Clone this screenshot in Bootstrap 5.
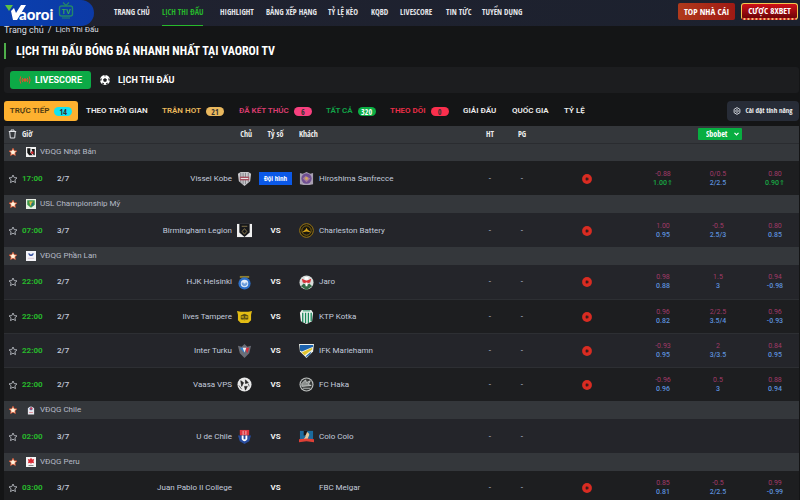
<!DOCTYPE html>
<html lang="vi">
<head>
<meta charset="utf-8">
<meta name="viewport" content="width=device-width, initial-scale=1">
<title>Lịch thi đấu bóng đá nhanh nhất tại Vaoroi TV</title>
<link href="https://cdn.jsdelivr.net/npm/bootstrap@5.3.0/dist/css/bootstrap.min.css" rel="stylesheet">
<style>
:root{--narrow:"Open Sans Condensed","Roboto Condensed","Roboto",sans-serif}
html{scrollbar-width:none}
body{background:#141516;color:#c3cbdc;font-family:"Roboto",sans-serif;font-size:8px;line-height:10px}
a{color:inherit;text-decoration:none}
svg{display:block;flex:none}
button{font:inherit;color:inherit}
.topbar{height:26px;background:linear-gradient(90deg,#202230,#1c212e);font-family:var(--narrow);font-weight:700;color:#e4e6ea}
.brand{width:94px;background:linear-gradient(90deg,#0a3fae,#0c3aa6);border-radius:0 13px 13px 0;overflow:hidden}
.menu{display:grid;grid-template-columns:48px 58px 46px 62px 43px 29px 46px 36px 42px;margin-left:20px}
.menu a{display:flex;align-items:center;justify-self:start;height:26px;padding-bottom:2px;white-space:nowrap;border-bottom:1px solid transparent}
.menu a.active{color:#27b82c;border-color:#27b82c}
.promos{gap:6px;padding:3px 2px 0 0}
.promo{font-size:9px;height:17px;border:0;border-radius:2px;color:#fff;padding:0 6px;white-space:nowrap;background:linear-gradient(90deg,#b03a1c,#a01a14)}
.promo-gold{border:1px solid #f3c650;border-bottom:2px dotted #f0c070;border-radius:3px;background:linear-gradient(#d01018,#6c0508)}
.crumbs{height:9px;line-height:8px;font-size:9px;color:#dcdfe4}
.crumbs ol{margin:0;padding:0}
.page-title{font:700 12px/16px "Roboto Condensed","Roboto",sans-serif;color:#fff;border-left:2px solid #4fae4a;padding-left:10px;margin:8px 0 8px 4px}
.panel{background:#1c1d1f;border-radius:3px;height:26px;margin:0 1px 0 4px;padding-left:6px;font-size:9px;font-weight:700;color:#fff}
.panel button{height:18px;border:0;background:none;padding:0 9px}
.panel .live{background:#0caa46;border-radius:3px;width:81px}
.tabs{margin:8px 1px 5px 4px;height:20px}
.tabs ul{display:grid;grid-template-columns:82px 76px 77px 87px 64px 73px 49px 52px 30px;margin:0;padding:0;list-style:none}
.tabs li button{height:20px;border:0;background:none;padding:0;display:flex;align-items:center;gap:5px;font-weight:600;color:#eee;white-space:nowrap}
.tabs li .on{background:#fdb12f;color:#4d3a12;border-radius:3px;width:74px;justify-content:center}
.pill{width:18px;height:9px;border-radius:5px;line-height:9px;text-align:center;font-weight:600;color:#333;font-family:var(--narrow)}
.tabs .c-hot{color:#eab95d}.tabs .c-done{color:#dc3d70}.tabs .c-all{color:#12a348}.tabs .c-follow{color:#ee2e48}
.bg-now{background:#10e4f2}.bg-hot{background:#e9b85e}.bg-done{background:#f8407f}.bg-every{background:#0caf45;color:#fff}.bg-follow{background:#fb2f4d}
.setup{background:#272c37;border:0;border-radius:4px;height:20px;width:72px;color:#eee;font-family:var(--narrow);font-weight:700;font-size:7px;white-space:nowrap;padding:0}
.sched{table-layout:fixed;width:calc(100% - 5px);margin:0 1px 0 4px;border-collapse:collapse}
.sched td,.sched th{padding:0;vertical-align:middle}
.sched thead tr{height:17px;background:#34373b;border-bottom:1px solid #2a2c30;font-family:var(--narrow);color:#eee}
.league{height:18px;background:#34373b;color:#b4bac6}
.sched .league th{font-weight:400}
.game{height:34px;background:#24252a;border-bottom:1px solid #2d2f33}
.game.dim{background:#1d1e20}
.game:has(+.league){border-bottom:0}
.sched .game td{padding-top:1px}
.hour{color:#27b82c;font-weight:700}
.day{font-weight:500}
.vs{font-weight:700;color:#f2f2f2}
.team{display:flex;align-items:center;gap:5px}
.team svg{width:15px;height:15px}
.blank{width:15px}
.lineup{background:#0b59e8;color:#fff;border:0;font:700 7px/13px var(--narrow);width:33px;padding:0;white-space:nowrap}
.odd{font-size:7px;line-height:9px;text-align:center;color:#a03a68}
.odd b{display:block;font-weight:500;color:#5c90dc}
.odd .up{color:#18a844}
.starbtn{border:0;background:none;padding:0;display:block;margin-left:4px}
.book{position:relative;display:inline-block}
.book select{appearance:none;border:0;border-radius:1px;background:#08ae41;color:#fff;font:700 8px/12px var(--narrow);height:12px;width:44px;padding:0 0 0 8px;display:block}
.book svg{position:absolute;right:2px;top:3px;pointer-events:none}
</style>
</head>
<body>
<svg width="0" height="0" class="position-absolute" aria-hidden="true">
<symbol id="star" viewBox="0 0 10 10"><path d="M5 1l1.200 2.600 2.800.3-2.100 1.900.6 2.800L5 7.200 2.500 8.600l.6-2.800L1 3.900l2.800-.3z" fill="none" stroke="#b4b8be" stroke-width=".9" stroke-linejoin="round"/></symbol>
<symbol id="starfull" viewBox="0 0 10 10"><path d="M5 1.200l1.200 2.500 2.700.3-2 1.800.5 2.700L5 7.200 2.600 8.500l.5-2.700-2-1.800 2.700-.3z" fill="#fff3dc" stroke="#e8502a" stroke-width=".7" stroke-linejoin="round"/></symbol>
<symbol id="play" viewBox="0 0 10 10"><circle cx="5" cy="5" r="4.900" fill="#d92c22"/><circle cx="5" cy="5" r="1.800" fill="#8a1d18"/><path d="M4.200 3.600L6.600 5 4.200 6.400z" fill="#1d1e20"/></symbol>
</svg>

<header class="topbar d-flex align-items-stretch">
<a class="brand" href="#" aria-label="Vaoroi TV"><svg width="94" height="26" viewBox="0 0 94 26"><path d="M5 5h8l-2 3-2 3z" fill="#5dc145"/><path d="M11 11l3-3 2 5 5-8h5L17 20h-4z" fill="#fff"/><text x="19" y="20" font-family="Lato,sans-serif" font-weight="900" font-size="15" fill="#fff">aoroi</text><rect x="59.500" y="6" width="13" height="10" rx="2" fill="none" stroke="#23866a" stroke-width="1.400"/><path d="M63 2.500l3 3 3-3M62 18h8" stroke="#23866a" fill="none" stroke-width="1.200"/><text x="66" y="13.500" text-anchor="middle" font-family="Roboto,sans-serif" font-weight="700" font-size="7" fill="#3ba55a">TV</text></svg></a>
<nav class="menu" aria-label="Chính"><a href="#">TRANG CHỦ</a><a href="#" class="active">LỊCH THI ĐẤU</a><a href="#">HIGHLIGHT</a><a href="#">BẢNG XẾP HẠNG</a><a href="#">TỶ LỆ KÈO</a><a href="#">KQBD</a><a href="#">LIVESCORE</a><a href="#">TIN TỨC</a><a href="#">TUYỂN DỤNG</a></nav>
<div class="promos ms-auto d-flex align-items-start"><button type="button" class="promo">TOP NHÀ CÁI</button><button type="button" class="promo promo-gold">CƯỢC 8XBET</button></div>
</header>

<main>
<nav class="crumbs px-1" aria-label="Đường dẫn"><ol class="d-flex gap-1 list-unstyled"><li><a href="#">Trang chủ</a></li><li aria-hidden="true">/</li><li class="small"><a href="#">Lịch Thi Đấu</a></li></ol></nav>
<h1 class="page-title">LỊCH THI ĐẤU BÓNG ĐÁ NHANH NHẤT TẠI VAOROI TV</h1>

<div class="panel d-flex align-items-center">
<button type="button" class="live d-flex align-items-center justify-content-center gap-1"><svg width="12" height="10" viewBox="0 0 10 8" fill="none" stroke="#e2512f" stroke-width="1"><circle cx="5" cy="4" r="1" fill="#e2512f"/><path d="M1.500 1Q0 4 1.500 7M8.500 1q1.500 3 0 6M3 2.200q-.8 1.800 0 3.600M7 2.200q.8 1.800 0 3.600" stroke-width=".8"/></svg>LIVESCORE</button>
<button type="button" class="d-flex align-items-center gap-2"><svg width="10" height="10" viewBox="0 0 10 10"><circle cx="5" cy="5" r="5" fill="#fff"/><path d="M5 3l2 1.500-.8 2.200H3.800L3 4.500zM3.500.4h3L5 1.500zM.2 4.200L1.500 3l.1 2-1 1.400zM9.800 4.200L8.500 3l-.1 2 1 1.400zM2.200 8.800l.3-1.400 1.600 1.200-.2 1zM7.800 8.800l-.3-1.400-1.600 1.200.2 1z" fill="#1c1d1f"/></svg>LỊCH THI ĐẤU</button>
</div>

<div class="tabs d-flex justify-content-between">
<ul>
<li><button type="button" class="on">TRỰC TIẾP <span class="pill bg-now">14</span></button></li>
<li><button type="button">THEO THỜI GIAN</button></li>
<li><button type="button" class="c-hot">TRẬN HOT <span class="pill bg-hot">21</span></button></li>
<li><button type="button" class="c-done">ĐÃ KẾT THÚC <span class="pill bg-done">6</span></button></li>
<li><button type="button" class="c-all">TẤT CẢ <span class="pill bg-every">320</span></button></li>
<li><button type="button" class="c-follow">THEO DÕI <span class="pill bg-follow">0</span></button></li>
<li><button type="button">GIẢI ĐẤU</button></li>
<li><button type="button">QUỐC GIA</button></li>
<li><button type="button">TỶ LỆ</button></li>
</ul>
<button type="button" class="setup d-flex align-items-center justify-content-center gap-1"><svg width="8" height="8" viewBox="0 0 8 8" fill="none" stroke="#dfe3ea"><path d="M4 .6l2.900 1.700v3.400L4 7.400 1.100 5.700V2.300z" stroke-width=".9"/><circle cx="4" cy="4" r="1.300" stroke-width=".8"/></svg>Cài đặt tính năng</button>
</div>

<table class="sched">
<colgroup><col style="width:18px"><col style="width:27px"><col style="width:41px"><col style="width:162px"><col style="width:47px"><col><col style="width:40px"><col style="width:24px"><col style="width:107px"><col style="width:44px"><col style="width:66px"><col style="width:48px"></colgroup>
<thead><tr>
<th><svg class="ms-1" width="9" height="10" viewBox="0 0 9 10" fill="none" stroke="#e4e6ea"><path d="M.8 2.500h7.400M3 2.300V1h3v1.300M1.700 2.700L2.300 9h4.400l.6-6.300" stroke-width="1"/></svg></th>
<th>Giờ</th><th></th><th class="text-end">Chủ</th><th class="text-center">Tỷ số</th><th>Khách</th><th class="text-center">HT</th><th class="text-center">PG</th><th></th>
<th colspan="3" class="text-center"><span class="book"><select aria-label="Nhà cái"><option>Sbobet</option></select><svg width="7" height="6" viewBox="0 0 7 6"><path d="M1.500 1.800l2 2 2-2" fill="none" stroke="#fff" stroke-width="1.200"/></svg></span></th>
</tr></thead>
<tbody id="list"></tbody>
</table>
</main>

<script src="https://cdn.jsdelivr.net/npm/bootstrap@5.3.0/dist/js/bootstrap.bundle.min.js"></script>
<script>
// Crests and league badges, drawn on a 16-unit grid
const art = {
japan:'<path fill="#f4f4f4" d="M0 0h16v16H0z"/><path fill="#151515" d="M2 2h5v7l4 4H5L2 9zM9 3h5v10h-2z"/><circle cx="10" cy="9" r="2.300" fill="#c9262a"/>',
usl:'<path fill="#e8efe4" d="M0 0h16v16H0z"/><path fill="#3d9a4a" d="M2 2h12v7l-6 5-6-5z"/><path fill="#e8b541" d="M5 4h6L7 11z"/><path fill="#2b6b80" d="M9 6h3v4l-3 2z"/>',
finland:'<path fill="#f3f3f7" d="M0 0h16v16H0z"/><path fill="#3853a0" d="M3 4h3l2 2 2-2h3l-3 4H6z"/><path fill="#c8a6b8" d="M3 11h10v1H3z"/>',
chile:'<path fill="#e8e8ee" d="M3 5q5-5 10 0v10H3z"/><circle cx="8" cy="6" r="2.500" fill="#4467ac"/><path fill="#d43c48" d="M7 4h3v3H7zM5 11h6v1H5z"/>',
peru:'<path fill="#f4f4f4" d="M0 0h16v16H0z"/><path fill="#d92a34" d="M3 3l3 1 2-3 2 3 3-1-1 4 1 3-4-1-1 3-1-3-4 1 1-3z"/><path fill="#444" d="M4 13h8v1H4z"/>',
vissel:'<path d="M1 3l3-2h8l3 2-1 8-6 5-6-5z" fill="#c9c9cd"/><path d="M4 2v11M6.500 2v12M9 2v12M12 2v10" stroke="#6b6c72" stroke-width=".8"/><path d="M3 6h10v4H3z" fill="#a4505f"/><path d="M4 8h8" stroke="#eee" stroke-width="1"/>',
hiro:'<path d="M1 2l3 1 4-2 4 2 3-1v12l-4 1H5l-4-1z" fill="#a9a0b2"/><circle cx="8" cy="8" r="5.500" fill="#6f4f92"/><path d="M4 8l3-3 5 3-4 4z" fill="#a57b9a"/><circle cx="8" cy="8" r="1.500" fill="#d4a85c"/>',
birm:'<path d="M0 1h16v14H0z" fill="#f0f0f0"/><path d="M2.500 1h11v9L8 15l-5.500-5z" fill="#16171a"/><path d="M5 3.500h6M5.500 9L8 6l2.500 3L8 12z" stroke="#a38e58" stroke-width=".8" fill="none"/>',
charl:'<circle cx="8" cy="8" r="7.300" fill="#19170f" stroke="#a37d12" stroke-width="1"/><circle cx="8" cy="8" r="5" fill="none" stroke="#8a6c12"/><path d="M3 10l4-3 1-2 1 2 4 3-5-1z" fill="#d9a519"/>',
hjk:'<path d="M3 1h10v2H3z" fill="#8f7e2d"/><circle cx="8" cy="9" r="6.500" fill="#2d70c8"/><circle cx="8" cy="9" r="4" fill="#e4edf8"/><path d="M5 8h2v1h2V8h2v2L9 12H7L5 10z" fill="#6d9edc"/>',
jaro:'<circle cx="8" cy="8" r="7.500" fill="#d9dedb"/><path d="M2 12l3-3 3 2 3-2 3 3-6 4z" fill="#356a48"/><path d="M3 4l5 2 5-2-1 4-4 1-4-1z" fill="#d3343b"/><path d="M6 2h4v3H6zM7 8h2v4H7z" fill="#fff"/>',
ilves:'<path d="M0 2l4 1h8l4-1-1 4v6l-3 3H4l-3-3V6z" fill="#e3bd14"/><path d="M4 7l4-2 4 2v4l-4 1-4-1z" fill="#5a4f14"/><path d="M5 8h2v1H5zM9 8h2v1H9zM6 11h4" stroke="#e3bd14" stroke-width=".7" fill="none"/>',
ktp:'<path d="M3 1h10l2 3-1 9-6 3-6-3L1 4z" fill="#eef4f0"/><path d="M4 4v10M7 4v11M10 4v11M13 4v9" stroke="#188759" stroke-width="1.400"/><path d="M4 2h8" stroke="#188759"/>',
inter:'<path d="M1 3l4 1 3-3 3 3 4-1-2 8-5 5-5-5z" fill="#6a6d76"/><path d="M3 5h5v6z" fill="#2c7ed0"/><path d="M8 5h5l-2 6z" fill="#d62e3d"/><path d="M6 5h4l-2 5z" fill="#eee"/>',
ifk:'<path d="M0 1h16l-1 8-7 7-7-7z" fill="#f1f3ea"/><path d="M1 2h14v2L3 9 1 8z" fill="#1c62ad"/><path d="M3 10L14 5v2L6 13z" fill="#e2c52f"/><path d="M7 14l6-5-1 3-4 3z" fill="#1c62ad"/>',
vps:'<circle cx="8" cy="8" r="7.500" fill="#e9e9e9"/><path d="M4 4l3 2-2 4zM9 3l3 3-3 1zM8 10l3 0-2 4zM2 9l3 4M12 7l1 3" fill="#222" stroke="#222" stroke-width=".7"/>',
haka:'<circle cx="8" cy="8" r="7.500" fill="#bfc2c1"/><circle cx="8" cy="8" r="6.300" fill="#353837"/><path d="M3 7l4-4 1 3 4-2-2 4 3 1-10 1zM4 12h8" stroke="#d6d8d7" stroke-width=".8" fill="#8a8e8c"/>',
uch:'<path d="M3 1h10v6H3z" fill="#df343f"/><path d="M6 2h4v4H6z" fill="#f4c0c0"/><path d="M7 2h2v4H7z" fill="#df343f"/><path d="M1 7h14l-2 6-5 3-5-3z" fill="#294d9e"/><path d="M5 7v4q3 4 6 0V7H9v4H7V7z" fill="#fff"/>',
colo:'<path d="M1 2h14v9H1z" fill="#1b6b9e"/><path d="M5 3q5-1 6 3l-2 5H5l2-3z" fill="#e2c79c"/><path d="M5 2h4l-2 5H5z" fill="#161616"/><path d="M0 11l8-1 8 1v3l-8-1-8 1z" fill="#df4036"/>'
};
const data = [
{l:'VĐQG Nhật Bản',b:'japan',g:[['17:00','2/7','Vissel Kobe','vissel','Hiroshima Sanfrecce','hiro','-0.88|1.00⇑|0/0.5|2/2.5|0.80|0.90⇑',1,1]]},
{l:'USL Championship Mỹ',b:'usl',g:[['07:00','3/7','Birmingham Legion','birm','Charleston Battery','charl','1.00|0.95|-0.5|2.5/3|0.80|0.85']]},
{l:'VĐQG Phần Lan',b:'finland',g:[
['22:00','2/7','HJK Helsinki','hjk','Jaro','jaro','0.98|0.88|1.5|3|0.94|-0.98'],
['22:00','2/7','Ilves Tampere','ilves','KTP Kotka','ktp','0.96|0.82|2/2.5|3.5/4|0.96|-0.93',1],
['22:00','2/7','Inter Turku','inter','IFK Mariehamn','ifk','-0.93|0.95|2|3/3.5|0.84|0.95'],
['22:00','2/7','Vaasa VPS','vps','FC Haka','haka','-0.96|0.96|0.5|3|0.88|0.94',1]]},
{l:'VĐQG Chile',b:'chile',g:[['02:00','3/7','U de Chile','uch','Colo Colo','colo','']]},
{l:'VĐQG Peru',b:'peru',g:[['03:00','3/7','Juan Pablo II College','','FBC Melgar','','0.85|0.81|-0.5|2/2.5|0.99|-0.99',1]]}
];
const pic = (k, s) => k ? `<svg width="${s}" height="${s}" viewBox="0 0 16 16" aria-hidden="true">${art[k]}</svg>` : '<span class="blank"></span>';
const star = id => `<button type="button" class="starbtn" aria-label="Theo dõi"><svg width="10" height="10"><use href="#${id}"/></svg></button>`;
const odd = (a, b) => `<td class="odd">${a ? `${a}<b class="${b.includes('⇑') ? 'up' : ''}">${b}</b>` : ''}</td>`;
let html = '';
for (const {l, b, g} of data) {
  html += `<tr class="league"><td>${star('starfull')}</td><th colspan="11" scope="rowgroup"><a href="#" class="d-flex align-items-center gap-1 ps-1">${pic(b, 10)}<span>${l}</span></a></th></tr>`;
  for (const [t, d, h, hi, a, ai, o, dim, line] of g) {
    const v = o.split('|');
    html += `<tr class="game ${dim ? 'dim' : ''}"><td>${star('star')}</td><td class="hour">${t}</td><td class="day"><span class="ps-2">${d}</span></td>
<td><div class="team justify-content-end">${h}${pic(hi, 15)}</div></td>
<td class="vs text-center">${line ? '<button type="button" class="lineup">Đội hình</button>' : 'VS'}</td>
<td><div class="team">${pic(ai, 15)}${a}</div></td><td class="text-center">-</td><td class="text-center">-</td>
<td>${o ? '<svg class="mx-auto" width="10" height="10" role="img" aria-label="Trực tiếp"><use href="#play"/></svg>' : ''}</td>${odd(v[0], v[1])}${odd(v[2], v[3])}${odd(v[4], v[5])}</tr>`;
  }
}
document.getElementById('list').innerHTML = html;
</script>
</body>
</html>
